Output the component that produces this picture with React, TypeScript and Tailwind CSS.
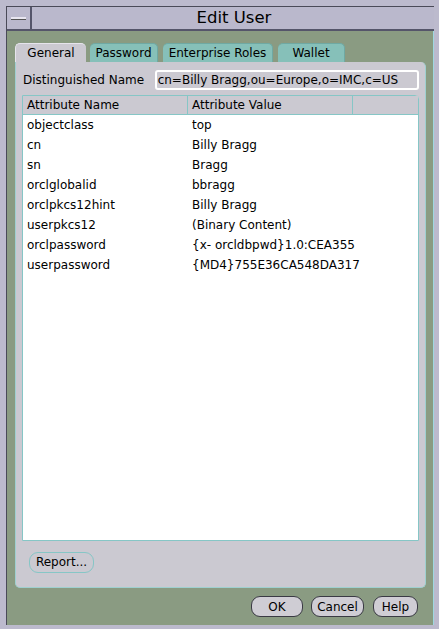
import React from "react";

const rows: [string, string][] = [
  ["objectclass", "top"],
  ["cn", "Billy Bragg"],
  ["sn", "Bragg"],
  ["orclglobalid", "bbragg"],
  ["orclpkcs12hint", "Billy Bragg"],
  ["userpkcs12", "(Binary Content)"],
  ["orclpassword", "{x- orcldbpwd}1.0:CEA355"],
  ["userpassword", "{MD4}755E36CA548DA317"],
];

const tabs = [
  { label: "General", w: "w-[71px]", active: true },
  { label: "Password", w: "w-[68px]" },
  { label: "Enterprise Roles", w: "w-[110px]" },
  { label: "Wallet", w: "w-[67px]" },
];

const Btn = ({ label, className = "" }: { label: string; className?: string }) => (
  <button
    className={`h-[21px] rounded-[9px] border border-[#3a3a44] bg-[#cfcdd4] text-[12px] text-black leading-none ${className}`}
  >
    {label}
  </button>
);

export default function App() {
  return (
    <div
      className="w-[439px] h-[629px] bg-[#bcbacd] pl-[6px] pr-[5px] pt-[6px] pb-[4px] text-black overflow-hidden"
      style={{ fontFamily: '"DejaVu Sans", sans-serif' }}
    >
      <div className="h-full flex flex-col border-l border-t border-[#4a4a58]">
        {/* Title bar */}
        <div className="h-[24px] flex border-b-2 border-[#55556a] bg-[#bab8cc]">
          <div className="w-[25px] flex items-center justify-center border-r-2 border-[#55556a]">
            <div className="w-[15px] h-[3px] bg-[#e8e6f0] border-b border-[#555]" />
          </div>
          <div className="flex-1 flex items-center justify-center text-[16.5px] pl-[2px]">
            Edit User
          </div>
        </div>

        {/* Content */}
        <div className="flex-1 flex flex-col bg-[#8a9b82] border-r border-[#9fd8e0] pl-[8px] pr-[6px] pt-[12px] pb-[6px]">
          {/* Tabs */}
          <div className="flex h-[19px] items-end">
            {tabs.map((t, i) => (
              <div
                key={t.label}
                className={`${t.w} ${i > 0 ? (i === 1 ? "ml-[4px]" : "ml-[5px]") : ""} h-[19px] flex items-center justify-center rounded-t-[5px] text-[12px] ${
                  t.active
                    ? "bg-[#cbc9d1] border-t border-l border-[#e6e4ec]"
                    : "bg-[#86c0b9] border-t border-r border-[#6fa9a3]"
                }`}
              >
                {t.label}
              </div>
            ))}
          </div>

          {/* Panel */}
          <div className="h-[526px] w-[411px] bg-[#cbc9d1] rounded-b-[5px] rounded-tr-[5px] border border-t-0 border-[#9fd0d0] flex flex-col pl-[6px] pr-[6px] pt-[8px]">
            <div className="flex items-center h-[20px]">
              <div className="w-[133px] text-[12px] pl-[1px]">Distinguished Name</div>
              <div className="w-[265px] h-[20px] border-2 border-white rounded-[3px] flex items-center pl-[1px] text-[12px] bg-[#cbc9d1]">
                cn=Billy Bragg,ou=Europe,o=IMC,c=US
              </div>
            </div>

            <div className="mt-[5px] w-[397px] h-[446px] border border-[#86c6c6] rounded-tr-[4px] bg-white flex flex-col">
              <div className="h-[19px] flex bg-[#cbc9d1] border-b border-[#86c6c6] text-[12px]">
                <div className="w-[165px] pl-[4px] flex items-center border-r border-[#86c6c6]">Attribute Name</div>
                <div className="w-[165px] pl-[4px] flex items-center border-r border-[#86c6c6]">Attribute Value</div>
                <div className="flex-1" />
              </div>
              {rows.map(([k, v]) => (
                <div key={k} className="h-[20px] flex items-center text-[12px]">
                  <div className="w-[165px] pl-[4px]">{k}</div>
                  <div className="pl-[4px]">{v}</div>
                </div>
              ))}
            </div>

            <div className="mt-[8px] pl-[7px]">
              <button className="w-[65px] h-[21px] rounded-[9px] border border-[#86c6c6] bg-[#cbc9d1] text-[12px] leading-none">
                Report...
              </button>
            </div>
          </div>

          {/* Bottom buttons */}
          <div className="flex justify-end mt-[8px] pr-[9px]">
            <Btn label="OK" className="w-[52px]" />
            <Btn label="Cancel" className="w-[53px] ml-[8px]" />
            <Btn label="Help" className="w-[45px] ml-[9px]" />
          </div>
        </div>
      </div>
    </div>
  );
}
